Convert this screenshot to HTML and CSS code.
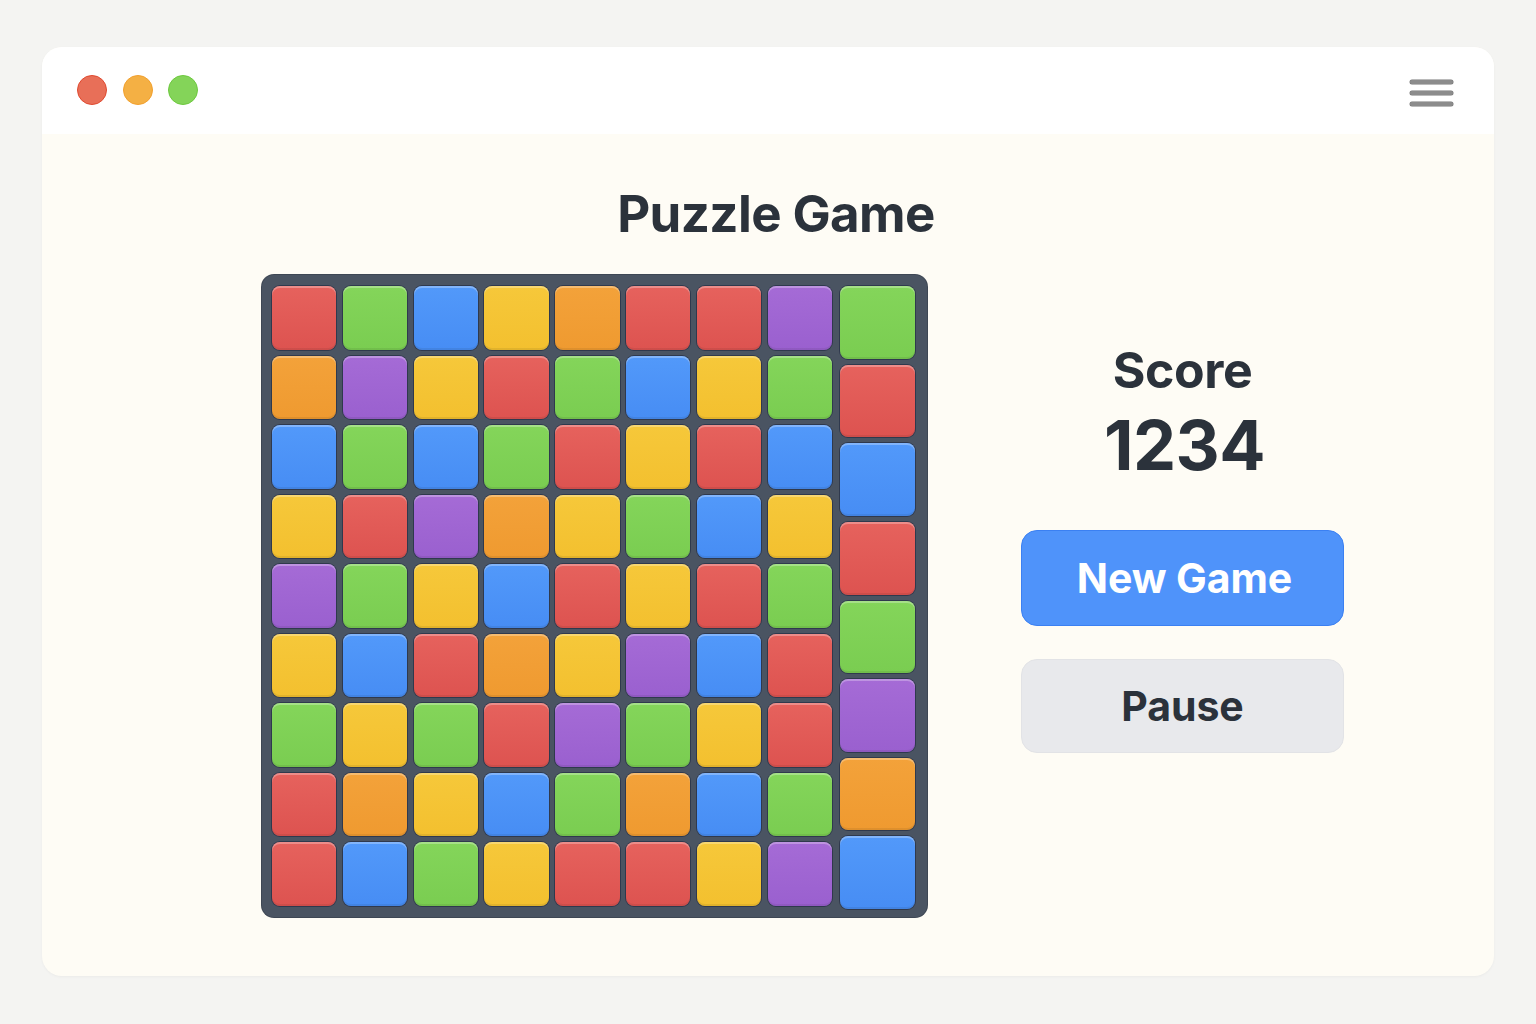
FILE: index.html
```html
<!DOCTYPE html>
<html lang="en">
<head>
<meta charset="utf-8">
<title>Puzzle Game</title>
<link rel="stylesheet" href="styles.css">
</head>
<body>
<div class="window">
  <header class="titlebar">
    <div class="lights">
      <span class="light red"></span>
      <span class="light yellow"></span>
      <span class="light green"></span>
    </div>
    <div class="menu" aria-label="Menu">
      <span></span><span></span><span></span>
    </div>
  </header>
  <main class="content">
    <h1 class="title">Puzzle Game</h1>
    <div class="game">
      <div class="board">
        <div class="grid">
          <div class="tile r"></div><div class="tile g"></div><div class="tile b"></div><div class="tile y"></div><div class="tile o"></div><div class="tile r"></div><div class="tile r"></div><div class="tile p"></div>
          <div class="tile o"></div><div class="tile p"></div><div class="tile y"></div><div class="tile r"></div><div class="tile g"></div><div class="tile b"></div><div class="tile y"></div><div class="tile g"></div>
          <div class="tile b"></div><div class="tile g"></div><div class="tile b"></div><div class="tile g"></div><div class="tile r"></div><div class="tile y"></div><div class="tile r"></div><div class="tile b"></div>
          <div class="tile y"></div><div class="tile r"></div><div class="tile p"></div><div class="tile o"></div><div class="tile y"></div><div class="tile g"></div><div class="tile b"></div><div class="tile y"></div>
          <div class="tile p"></div><div class="tile g"></div><div class="tile y"></div><div class="tile b"></div><div class="tile r"></div><div class="tile y"></div><div class="tile r"></div><div class="tile g"></div>
          <div class="tile y"></div><div class="tile b"></div><div class="tile r"></div><div class="tile o"></div><div class="tile y"></div><div class="tile p"></div><div class="tile b"></div><div class="tile r"></div>
          <div class="tile g"></div><div class="tile y"></div><div class="tile g"></div><div class="tile r"></div><div class="tile p"></div><div class="tile g"></div><div class="tile y"></div><div class="tile r"></div>
          <div class="tile r"></div><div class="tile o"></div><div class="tile y"></div><div class="tile b"></div><div class="tile g"></div><div class="tile o"></div><div class="tile b"></div><div class="tile g"></div>
          <div class="tile r"></div><div class="tile b"></div><div class="tile g"></div><div class="tile y"></div><div class="tile r"></div><div class="tile r"></div><div class="tile y"></div><div class="tile p"></div>
        </div>
        <div class="side">
          <div class="tile g"></div>
          <div class="tile r"></div>
          <div class="tile b"></div>
          <div class="tile r"></div>
          <div class="tile g"></div>
          <div class="tile p"></div>
          <div class="tile o"></div>
          <div class="tile b"></div>
        </div>
      </div>
      <aside class="panel">
        <div class="score-label">Score</div>
        <div class="score-value">1234</div>
        <button class="btn btn-primary">New Game</button>
        <button class="btn btn-secondary">Pause</button>
      </aside>
    </div>
  </main>
</div>
</body>
</html>
```

FILE: styles.css
```css
* { box-sizing: border-box; }

html, body {
  margin: 0;
  padding: 0;
}

body {
  background: #f4f4f2;
  font-family: Inter, "Liberation Sans", Arial, sans-serif;
  color: #2b323b;
  padding: 47px 42px 48px 42px;
}

.window {
  height: 929px;
  border-radius: 20px;
  overflow: hidden;
  background: #fefcf5;
  box-shadow: 0 1px 3px rgba(0, 0, 0, 0.04);
  display: flex;
  flex-direction: column;
}

.titlebar {
  height: 87px;
  flex: none;
  background: #ffffff;
  display: flex;
  align-items: center;
  justify-content: space-between;
  padding: 0 41px 0 35px;
}

.lights {
  display: flex;
  gap: 15.5px;
  margin-top: -2px;
}

.light {
  width: 30px;
  height: 30px;
  border-radius: 50%;
  display: block;
}
.light.red { background: #e86f58; border: 1.5px solid #e04a30; }
.light.yellow { background: #f4b044; border: 1.5px solid #f2a02e; }
.light.green { background: #84d459; border: 1.5px solid #6dc93f; }

.menu {
  width: 43px;
  display: flex;
  flex-direction: column;
  gap: 7px;
  margin-top: 4px;
}
.menu span {
  display: block;
  height: 4px;
  border-radius: 2px;
  background: #8c8c8c;
  box-shadow: 0 0 0 0.5px #777;
}

.content {
  flex: 1;
  display: flex;
  flex-direction: column;
  padding-top: 48px;
}

.title {
  margin: 0 0 0 16px;
  text-align: center;
  font-size: 51px;
  font-weight: 700;
  line-height: 64px;
  letter-spacing: -0.6px;
  color: #2b323b;
}

.game {
  display: flex;
  align-items: flex-start;
  padding-left: 220px;
  margin-top: 29px;
}

.board {
  display: flex;
  align-items: flex-start;
  background: #4a5462;
  border-radius: 12px;
  padding: 11px 12px 8px 10px;
  box-shadow: 0 0 0 1px #3e4754;
}

.grid {
  width: 560px;
  height: 620px;
  display: grid;
  grid-template-columns: repeat(8, 1fr);
  grid-template-rows: repeat(9, 1fr);
  column-gap: 6.5px;
  row-gap: 6px;
}

.side {
  width: 75px;
  height: 623px;
  margin-left: 8px;
  display: flex;
  flex-direction: column;
  gap: 6px;
}
.side .tile { flex: 1; }

.tile {
  border-radius: 8px;
  box-shadow:
    inset 0 2px 0 rgba(255, 255, 255, 0.28),
    inset 0 -2px 0 rgba(0, 0, 0, 0.07),
    0 0 0 1px rgba(25, 35, 60, 0.55);
}
.tile.r { background: linear-gradient(#e6625d, #dd5350); }
.tile.g { background: linear-gradient(#84d55a, #7acd51); }
.tile.b { background: linear-gradient(#5299fa, #478df4); }
.tile.y { background: linear-gradient(#f6c83a, #f3c02f); }
.tile.o { background: linear-gradient(#f3a23a, #ef9a30); }
.tile.p { background: linear-gradient(#a56bd6, #9a60cf); }

.panel {
  width: 323px;
  margin-left: 94px;
  padding-top: 65px;
  display: flex;
  flex-direction: column;
  align-items: stretch;
}

.score-label {
  text-align: center;
  font-size: 50px;
  font-weight: 700;
  line-height: 60px;
  letter-spacing: -0.4px;
  color: #2b323b;
}

.score-value {
  text-align: center;
  font-size: 68.5px;
  font-weight: 700;
  line-height: 80px;
  letter-spacing: -0.5px;
  color: #2b323b;
  margin-top: 6px;
  padding-left: 4px;
}

.btn {
  font-family: Inter, "Liberation Sans", Arial, sans-serif;
  font-weight: 700;
  font-size: 41px;
  letter-spacing: -0.1px;
  border-radius: 16px;
  cursor: pointer;
  display: flex;
  align-items: center;
  justify-content: center;
}

.btn-primary {
  height: 96px;
  margin-top: 44px;
  background: #4f93fa;
  border: 1.5px solid #3b80f2;
  color: #ffffff;
  padding-left: 10px;
}

.btn-secondary {
  height: 94px;
  margin-top: 33px;
  background: #e8e9ec;
  border: 1px solid #e2e3e6;
  color: #2b323b;
  padding-left: 6px;
}
```
